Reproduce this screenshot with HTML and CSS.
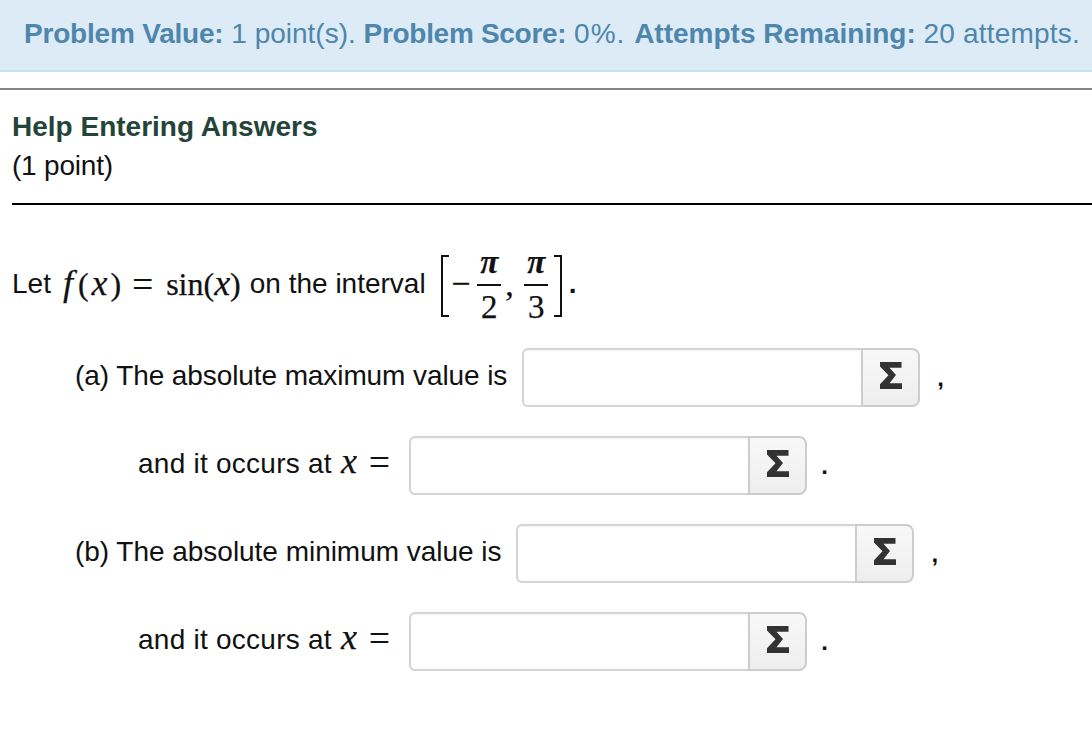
FILE: index.html
```html
<!DOCTYPE html>
<html lang="en">
<head>
<meta charset="utf-8">
<title>Problem</title>
<link rel="stylesheet" href="styles.css">
</head>
<body>
<div class="banner"><b class="tight">Problem Value:</b> <span>1 point(s).</span> <b class="snug">Problem Score:</b> <span class="pct">0%.</span> <b>Attempts Remaining:</b> <span class="wide">20 attempts.</span></div>
<hr class="rule-gray">
<section class="head">
  <h1 class="title">Help Entering Answers</h1>
  <div class="points">(1 point)</div>
</section>
<hr class="rule-black">
<p class="intro">
  <span>Let</span>
  <span class="math fx"><i class="f">f</i>(<i class="xm">x</i>)<span class="eq">=</span>sin(<i>x</i>)</span>
  <span>on the interval</span>
  <span class="math interval">
    <span class="brk brk-l"></span>
    <span class="minus">−</span>
    <span class="frac"><i class="num">π</i><span class="den">2</span></span>
    <span class="sep">,</span>
    <span class="frac"><i class="num">π</i><span class="den">3</span></span>
    <span class="brk brk-r"></span>
  </span>
  <span class="end">.</span>
</p>
<div class="row row-a">
  <span class="label label-a">(a) The absolute maximum value is</span>
  <span class="field"><input class="input w-a" type="text" aria-label="a"><button class="btn" type="button"><svg class="sigma" viewBox="0 0 22 27"><path d="M0 0H21.500V5.800H9.500l6.500 7.300-6.500 8.100H22V27H0v-4.800L8.500 13.300 0 4.500z" fill="#333"/></svg></button></span>
  <span class="tail">,</span>
</div>
<div class="row row-x">
  <span class="label label-x">and it occurs at <span class="math mx"><i>x</i><span class="eq">=</span></span></span>
  <span class="field"><input class="input w-x" type="text" aria-label="x"><button class="btn" type="button"><svg class="sigma" viewBox="0 0 22 27"><path d="M0 0H21.500V5.800H9.500l6.500 7.300-6.500 8.100H22V27H0v-4.800L8.500 13.300 0 4.500z" fill="#333"/></svg></button></span>
  <span class="tail tail-dot">.</span>
</div>
<div class="row row-a">
  <span class="label label-b">(b) The absolute minimum value is</span>
  <span class="field"><input class="input w-a" type="text" aria-label="b"><button class="btn" type="button"><svg class="sigma" viewBox="0 0 22 27"><path d="M0 0H21.500V5.800H9.500l6.500 7.300-6.500 8.100H22V27H0v-4.800L8.500 13.300 0 4.500z" fill="#333"/></svg></button></span>
  <span class="tail">,</span>
</div>
<div class="row row-x">
  <span class="label label-x">and it occurs at <span class="math mx"><i>x</i><span class="eq">=</span></span></span>
  <span class="field"><input class="input w-x" type="text" aria-label="x2"><button class="btn" type="button"><svg class="sigma" viewBox="0 0 22 27"><path d="M0 0H21.500V5.800H9.500l6.500 7.300-6.500 8.100H22V27H0v-4.800L8.500 13.300 0 4.500z" fill="#333"/></svg></button></span>
  <span class="tail tail-dot">.</span>
</div>
</body>
</html>
```
FILE: styles.css
```css
* { box-sizing: border-box; }
html, body { margin: 0; padding: 0; background: #fff; }
body {
  width: 1092px;
  height: 732px;
  overflow: hidden;
  font-family: "Liberation Sans", Arial, sans-serif;
  font-size: 28px;
  color: #111;
}
.banner {
  height: 72px;
  padding: 16px 0 0 24px;
  line-height: 36px;
  background: #dcebf6;
  border-bottom: 2px solid #c4e5ef;
  color: #4e86ac;
  white-space: nowrap;
}
.tight { letter-spacing: -.2px; }
.snug { letter-spacing: -.3px; }
.wide { letter-spacing: .2px; }
.pct { letter-spacing: 1px; margin-right: 1px; }
.rule-gray {
  margin: 16px 0 0;
  height: 2px;
  border: 0;
  background: #858585;
}
.head { padding: 18px 12px 0; }
.title {
  margin: 0;
  font-size: 28px;
  line-height: 38px;
  font-weight: bold;
  color: #24443a;
}
.points { line-height: 40px; letter-spacing: -.2px; }
.rule-black {
  margin: 17px 0 0 12px;
  height: 2px;
  border: 0;
  background: #000;
}
.intro {
  margin: 0;
  padding: 48px 0 4px 12px;
  height: 114px;
  display: flex;
  align-items: center;
  gap: 9px;
  line-height: 36px;
}
.math {
  font-family: "Liberation Serif", "Times New Roman", serif;
  font-size: 32px;
  -webkit-text-stroke: .25px #111;
}
.math i { font-size: 36px; }
.f { margin-right: 5px; }
.xm { margin: 0 3px; }
.eq { margin: 0 13px 0 11px; font-size: 37px; vertical-align: -2px; }
.fx { margin-left: 3px; }
.interval {
  display: inline-flex;
  align-items: center;
  height: 70px;
  margin: 4px 0 0 6.5px;
}
.brk { width: 8px; height: 62px; border: 2px solid #111; }
.brk-l { border-right: 0; }
.brk-r { border-left: 0; margin-left: 6px; }
.minus { margin: 0 7px 5px 2px; font-size: 34px; line-height: 34px; }
.frac {
  display: inline-flex;
  flex-direction: column;
  align-items: center;
  width: 24px;
  margin-bottom: 3px;
}
.math i.num { font-size: 33px; line-height: 33px; margin-bottom: 5px; font-weight: bold; }
.den {
  border-top: 2px solid #111;
  width: 100%;
  padding-top: 5px;
  text-align: center;
  font-size: 33px;
  line-height: 33px;
}
.sep { margin: 0 10.5px 3px 4px; font-size: 34px; line-height: 34px; }
.end { margin-left: -2.5px; font-weight: bold; }
.row {
  display: flex;
  align-items: center;
  height: 59px;
  margin-top: 29px;
  gap: 15px;
}
.row-a { padding-left: 75px; }
.row-x { padding-left: 138px; }
.label { margin-bottom: 3px; line-height: 32px; white-space: nowrap; }
.label-a { letter-spacing: -.09px; }
.label-b { letter-spacing: -.03px; }
.label-x { letter-spacing: .25px; }
.mx { margin-left: 1px; letter-spacing: 0; line-height: 1px; }
.mx .eq { margin: 0 4.500px 0 12px; }
.field { display: flex; height: 59px; }
.input {
  height: 59px;
  border: 2px solid #d4d4d4;
  border-right: 0;
  border-radius: 6px 0 0 6px;
  background: #fff;
  box-shadow: inset 0 1px 1px rgba(0,0,0,.05);
}
.w-a { width: 339px; }
.w-x { width: 339px; }
.btn {
  display: flex;
  align-items: center;
  justify-content: center;
  width: 59px;
  height: 59px;
  padding: 0 0 5px;
  border: 2px solid #cdcdcd;
  border-radius: 0 8px 8px 0;
  background: linear-gradient(#f8f8f8, #eee);
}
.sigma { width: 22px; height: 27px; }
.tail { margin-left: 2px; font-size: 24px; font-weight: bold; }
.tail-dot { margin-left: -1px; }
```
